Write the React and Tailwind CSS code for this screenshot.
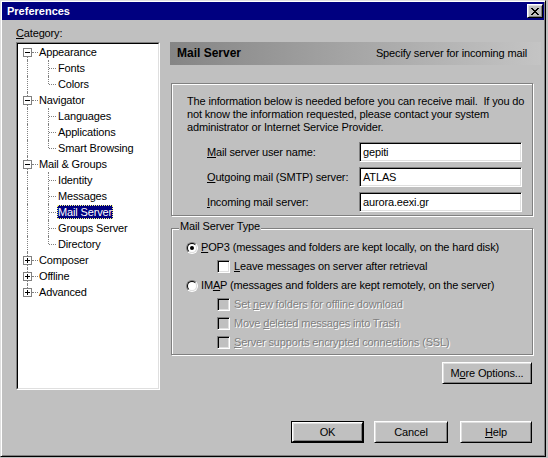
import React from 'react'

const tree = [
    { label: 'Appearance', open: true, children: ['Fonts', 'Colors'] },
    { label: 'Navigator', open: true, children: ['Languages', 'Applications', 'Smart Browsing'] },
    { label: 'Mail & Groups', open: true, children: ['Identity', 'Messages', 'Mail Server', 'Groups Server', 'Directory'] },
    { label: 'Composer', open: false, children: [] },
    { label: 'Offline', open: false, children: [] },
    { label: 'Advanced', open: false, children: [] },
]

// flatten the tree into rows with their connector info
const rows = []
tree.forEach((node, i) => {
    rows.push({ type: 'top', label: node.label, open: node.open, first: i === 0, last: i === tree.length - 1 })
    if (node.open) {
        node.children.forEach((c, j) => {
            rows.push({ type: 'child', label: c, lastChild: j === node.children.length - 1 })
        })
    }
})

const raised = 'border border-t-white border-l-white border-b-black border-r-black shadow-[inset_1px_1px_0_#dfdfdf,inset_-1px_-1px_0_#808080]'
const sunken = 'border border-t-[#808080] border-l-[#808080] border-b-white border-r-white shadow-[inset_1px_1px_0_#000,inset_-1px_-1px_0_#dfdfdf]'
const etched = 'border border-[#808080] shadow-[inset_1px_1px_0_#fff,1px_1px_0_#fff]'
const disabled = 'text-[#808080] [text-shadow:1px_1px_0_#fff]'

export default function App() {
    return (
        <div className="w-[548px] h-[458px] bg-[#c0c0c0] font-['Liberation_Sans',Arial,sans-serif] text-[11px] leading-[13px] tracking-[-0.15px] text-black">
            <div className="w-[546px] h-[457px] p-[1px] flex flex-col border border-t-[#dfdfdf] border-l-[#dfdfdf] border-b-black border-r-black shadow-[inset_1px_1px_0_#fff,inset_-1px_-1px_0_#808080]">

                {/* Title bar */}
                <div className="h-[18px] bg-[#000080] flex items-center justify-between pl-[5px] pr-[1px]">
                    <span className="text-white font-bold text-[11px] tracking-normal">Preferences</span>
                    <div className={`w-[16px] h-[14px] bg-[#c0c0c0] flex items-center justify-center ${raised}`}>
                        <svg width="8" height="7" viewBox="0 0 8 7" shapeRendering="crispEdges">
                            <path d="M0 0h2v1h-2zM6 0h2v1h-2zM1 1h2v1h-2zM5 1h2v1h-2zM2 2h4v1h-4zM3 3h2v1h-2zM2 4h4v1h-4zM1 5h2v1h-2zM5 5h2v1h-2zM0 6h2v1h-2zM6 6h2v1h-2z" fill="#000" />
                        </svg>
                    </div>
                </div>

                {/* Body */}
                <div className="flex-1 flex flex-col pl-[14px] pt-[7px]">
                    <div className="flex gap-[10px]">
                        {/* Category tree */}
                        <div className="w-[144px] flex flex-col">
                            <div className="h-[15px]"><u>C</u>ategory:</div>
                            <div className="h-[348px] border border-t-[#808080] border-l-[#808080] border-b-white border-r-white">
                                <div className="h-full bg-white border border-t-black border-l-black border-b-[#dfdfdf] border-r-[#dfdfdf]">
                                    {rows.map((r, i) => <TreeRow key={i} row={r} />)}
                                </div>
                            </div>
                        </div>

                        {/* Right pane */}
                        <div className="w-[371px] pt-[15px] flex flex-col">
                            <div className="h-[23px] flex items-center justify-between pl-[7px] pr-[14px] bg-gradient-to-r from-[#858585] via-[#a6a6a6] to-[#c4c4c4]">
                                <span className="font-bold text-[12px] tracking-normal">Mail Server</span>
                                <span>Specify server for incoming mail</span>
                            </div>

                            <div className={`mt-[18px] ml-[1px] w-[362px] h-[133px] pl-[15px] pt-[11px] ${etched}`}>
                                <p className="whitespace-nowrap">
                                    The information below is needed before you can receive mail.&nbsp; If you do<br />
                                    not know the information requested, please contact your system<br />
                                    administrator or Internet Service Provider.
                                </p>
                                <div className="mt-[8px] flex flex-col gap-[5px]">
                                    <Field label={<><u>M</u>ail server user name:</>} value="gepiti" />
                                    <Field label={<><u>O</u>utgoing mail (SMTP) server:</>} value="ATLAS" />
                                    <Field label={<><u>I</u>ncoming mail server:</>} value="aurora.eexi.gr" />
                                </div>
                            </div>

                            <div className={`relative mt-[12px] ml-[1px] w-[362px] h-[127px] pt-[9px] ${etched}`}>
                                <span className="absolute -top-[9px] left-[7px] px-[1px] bg-[#c0c0c0]">Mail Server Type</span>
                                <Radio checked label={<><u>P</u>OP3 (messages and folders are kept locally, on the hard disk)</>} />
                                <Check label={<><u>L</u>eave messages on server after retrieval</>} />
                                <Radio label={<>IM<u>A</u>P (messages and folders are kept remotely, on the server)</>} />
                                <Check disabled label={<>Set <u>n</u>ew folders for offline download</>} />
                                <Check disabled label={<>Move <u>d</u>eleted messages into Trash</>} />
                                <Check disabled label={<><u>S</u>erver supports encrypted connections (SSL)</>} />
                            </div>

                            <div className="mt-[7px] self-end mr-[9px]">
                                <Button className="w-[90px]">M<u>o</u>re Options...</Button>
                            </div>
                        </div>
                    </div>

                    {/* Dialog buttons */}
                    <div className="mt-[31px] flex justify-end pr-[12px]">
                        <div className="w-[73px] h-[22px] border border-black">
                            <div className={`w-full h-full flex items-center justify-center ${raised}`}>OK</div>
                        </div>
                        <Button className="ml-[10px] w-[74px]">Cancel</Button>
                        <Button className="ml-[12px] w-[72px]"><u>H</u>elp</Button>
                    </div>
                </div>
            </div>
        </div>
    )
}

function TreeRow({ row }) {
    const dots = 'absolute border-dotted border-[#808080]'
    if (row.type === 'top') {
        const vTop = row.first ? 'top-[8px] h-[8px]' : row.last ? 'top-0 h-[8px]' : 'top-0 h-[16px]'
        return (
            <div className="relative h-[16px] flex items-center pl-[20px]">
                <span className={`${dots} left-[9px] border-l ${vTop}`} />
                <span className={`${dots} left-[14px] top-[8px] w-[6px] border-t`} />
                <span className="absolute left-[5px] top-[4px] w-[9px] h-[9px] border border-[#808080] bg-white">
                    <span className="absolute left-[1px] top-[3px] w-[5px] h-[1px] bg-black" />
                    {!row.open && <span className="absolute left-[3px] top-[1px] w-[1px] h-[5px] bg-black" />}
                </span>
                <span className="px-[1px]">{row.label}</span>
            </div>
        )
    }
    const selected = row.label === 'Mail Server'
    return (
        <div className="relative h-[16px] flex items-center pl-[39px]">
            <span className={`${dots} left-[9px] top-0 h-[16px] border-l`} />
            <span className={`${dots} left-[30px] top-0 border-l ${row.lastChild ? 'h-[8px]' : 'h-[16px]'}`} />
            <span className={`${dots} left-[31px] top-[8px] w-[7px] border-t`} />
            {selected ? (
                <span className="h-[14px] flex items-center px-[1px] bg-[#000080] text-white outline outline-1 outline-dotted outline-[#ffff80] -outline-offset-1">{row.label}</span>
            ) : (
                <span className="px-[1px]">{row.label}</span>
            )}
        </div>
    )
}

function Field({ label, value }) {
    return (
        <div className="flex items-center h-[20px]">
            <div className="w-[172px] pl-[20px] whitespace-nowrap">{label}</div>
            <div className={`w-[163px] h-[20px] bg-white flex items-center pl-[3px] ${sunken}`}>{value}</div>
        </div>
    )
}

function Radio({ checked, label }) {
    return (
        <div className="h-[19px] flex items-center pl-[14px]">
            <span className="w-[12px] h-[12px] rounded-full border border-t-[#808080] border-l-[#808080] border-b-white border-r-white mr-[3px] shrink-0">
                <span className="w-full h-full rounded-full bg-white border border-t-black border-l-black border-b-[#dfdfdf] border-r-[#dfdfdf] flex items-center justify-center">
                    {checked && <span className="w-[4px] h-[4px] rounded-full bg-black" />}
                </span>
            </span>
            <span className="whitespace-nowrap">{label}</span>
        </div>
    )
}

function Check({ disabled: off, label }) {
    return (
        <div className="h-[19px] flex items-center pl-[45px]">
            <span className={`w-[13px] h-[13px] mr-[4px] shrink-0 ${off ? 'bg-[#c0c0c0]' : 'bg-white'} ${sunken}`} />
            <span className={`whitespace-nowrap ${off ? disabled : ''}`}>{label}</span>
        </div>
    )
}

function Button({ className = '', children }) {
    return (
        <div className={`h-[22px] flex items-center justify-center ${raised} ${className}`}>
            {children}
        </div>
    )
}
